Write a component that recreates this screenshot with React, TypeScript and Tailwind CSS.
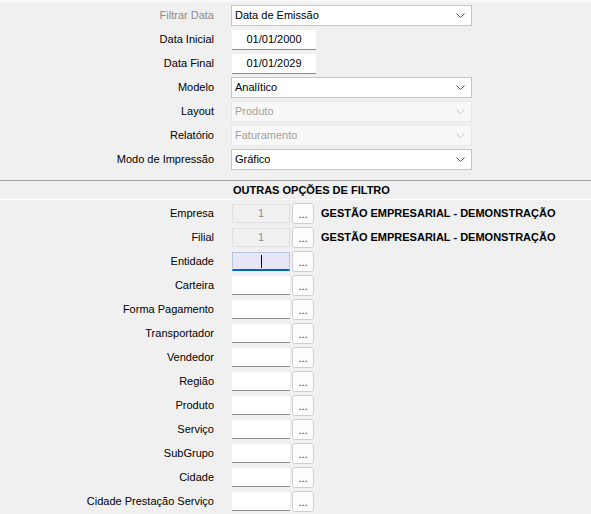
import React from "react";

const font = { fontFamily: '"Liberation Sans", Arial, sans-serif' };

function Chevron({ disabled }: { disabled?: boolean }) {
  return (
    <svg width="9" height="5" viewBox="0 0 9 5" className="shrink-0">
      <path
        d="M0.5 0.5 L4.5 4.5 L8.5 0.5"
        fill="none"
        stroke={disabled ? "#c8c8c8" : "#5a5a5a"}
        strokeWidth="1"
      />
    </svg>
  );
}

function Label({ text, muted }: { text: string; muted?: boolean }) {
  return (
    <div
      className={`w-[214px] shrink-0 text-right text-[11px] ${
        muted ? "text-[#8c8c8c]" : "text-[#000000]"
      }`}
    >
      {text}
    </div>
  );
}

function Combo({
  label,
  value,
  disabled,
  mutedLabel,
}: {
  label: string;
  value: string;
  disabled?: boolean;
  mutedLabel?: boolean;
}) {
  return (
    <div className="flex h-[21px] items-center">
      <Label text={label} muted={mutedLabel} />
      <div
        className={`ml-[17px] flex h-[21px] w-[241px] items-center justify-between border pl-[3px] pr-[6px] text-[11px] ${
          disabled
            ? "border-[#e8e8e8] bg-[#f8f8f8] text-[#a0a0a0]"
            : "border-[#c4c4c4] bg-white text-black"
        }`}
      >
        <span>{value}</span>
        <Chevron disabled={disabled} />
      </div>
    </div>
  );
}

function DateField({ label, value }: { label: string; value: string }) {
  return (
    <div className="flex h-[21px] items-center">
      <Label text={label} />
      <div className="ml-[18px] flex h-[20px] w-[84px] items-center justify-center border-b border-b-[#8a8a8a] bg-white text-[11px] text-black">
        {value}
      </div>
    </div>
  );
}

type LookupProps = {
  label: string;
  value?: string;
  readOnly?: boolean;
  focused?: boolean;
  desc?: string;
};

function Lookup({ label, value, readOnly, focused, desc }: LookupProps) {
  let box = "border-b border-b-[#8a8a8a] bg-white";
  if (readOnly) box = "border border-[#e0e0e0] bg-[#f0f0f0] text-[#8c8c8c]";
  if (focused) box = "border border-[#b8c4dc] border-b-2 border-b-[#0067c0] bg-[#e6e6f8]";
  return (
    <div className="flex h-[21px] items-center">
      <Label text={label} />
      <div
        className={`ml-[18px] flex h-[19px] w-[58px] items-center justify-center text-[11px] ${box}`}
      >
        {value}
        {focused && <span className="h-[13px] w-px bg-black" />}
      </div>
      <div className="ml-[2px] flex h-[21px] w-[22px] items-end justify-center rounded-[3px] border border-[#d0d0d0] bg-[#fdfdfd] pb-[3px] text-[11px] leading-none text-[#202020]">
        ...
      </div>
      {desc && (
        <div className="ml-[7px] text-[11px] font-bold text-black">{desc}</div>
      )}
    </div>
  );
}

export default function App() {
  const lookups: LookupProps[] = [
    { label: "Empresa", value: "1", readOnly: true, desc: "GESTÃO EMPRESARIAL - DEMONSTRAÇÃO" },
    { label: "Filial", value: "1", readOnly: true, desc: "GESTÃO EMPRESARIAL - DEMONSTRAÇÃO" },
    { label: "Entidade", focused: true },
    { label: "Carteira" },
    { label: "Forma Pagamento" },
    { label: "Transportador" },
    { label: "Vendedor" },
    { label: "Região" },
    { label: "Produto" },
    { label: "Serviço" },
    { label: "SubGrupo" },
    { label: "Cidade" },
    { label: "Cidade Prestação Serviço" },
  ];

  return (
    <div className="h-[514px] w-[591px] overflow-hidden bg-[#f0f0f0]" style={font}>
      <div className="h-[2px] bg-[#f8f8f8]" />
      {/* Filtros principais */}
      <div className="flex flex-col gap-[3px] pt-[3px]">
        <Combo label="Filtrar Data" value="Data de Emissão" mutedLabel />
        <DateField label="Data Inicial" value="01/01/2000" />
        <DateField label="Data Final" value="01/01/2029" />
        <Combo label="Modelo" value="Analítico" />
        <Combo label="Layout" value="Produto" disabled />
        <Combo label="Relatório" value="Faturamento" disabled />
        <Combo label="Modo de Impressão" value="Gráfico" />
      </div>

      {/* Outras opções */}
      <div className="mt-[10px] border-t border-t-[#a0a0a0]">
        <div className="flex h-[19px] items-center border-b border-b-white pl-[233px] text-[11px] font-bold text-black">
          OUTRAS OPÇÕES DE FILTRO
        </div>
        <div className="flex flex-col gap-[3px] pt-[3px]">
          {lookups.map((l) => (
            <Lookup key={l.label} {...l} />
          ))}
        </div>
      </div>
    </div>
  );
}
